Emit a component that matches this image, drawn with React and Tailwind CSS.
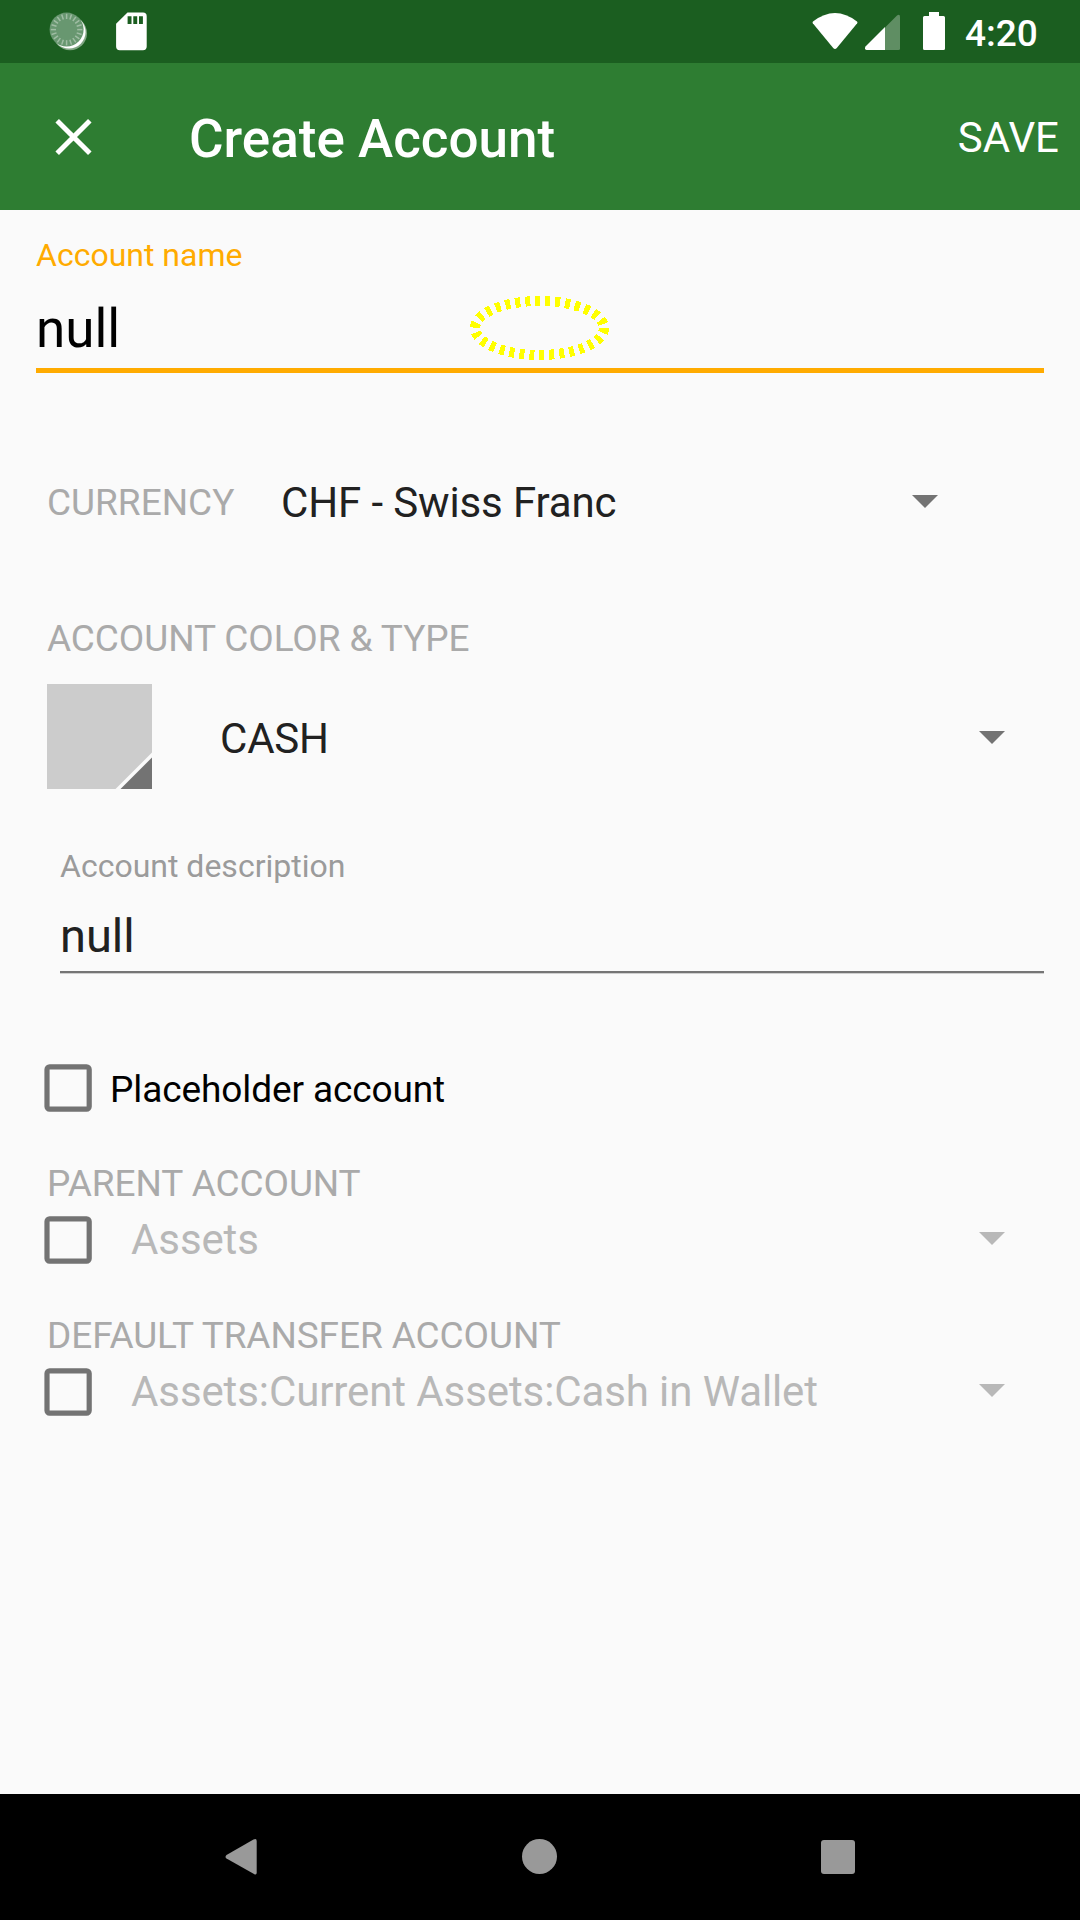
const SPINNER_TICKS = Array.from({ length: 20 }, (_, i) => i * 18);

function Caret({ className = "" }) {
  return (
    <svg width="26" height="13" viewBox="0 0 26 13" className={`block shrink-0 ${className}`}>
      <path d="M0 0H26L13 13Z" fill="currentColor" />
    </svg>
  );
}

function Checkbox() {
  return (
    <span className="block size-12 shrink-0">
      <svg width="48" height="48" viewBox="0 0 48 48" className="block">
        <rect x="3" y="2.9" width="42.2" height="42.2" rx="2.6" fill="none" stroke="#737373" strokeWidth="5.2" />
      </svg>
    </span>
  );
}

function StatusBar() {
  return (
    <div className="flex h-[63px] items-start bg-[#1b5e20] text-white">
      <svg width="200" height="63" viewBox="0 0 200 63" className="block">
        <circle cx="70" cy="33.2" r="17" fill="#fff" fillOpacity="0.45" />
        <circle cx="69" cy="32" r="16.6" fill="#fff" />
        <circle cx="66.6" cy="29.6" r="17" fill="#689770" />
        {SPINNER_TICKS.map((a) => (
          <path key={a} d="M66.6 13.8V19" stroke="#a0bda4" strokeWidth="1.5" transform={`rotate(${a} 66.6 29.6)`} />
        ))}
        <path d="M127.5 12.5H143a3.7 3.7 0 0 1 3.7 3.7V46.5a3.7 3.7 0 0 1-3.7 3.7H119.8a3.7 3.7 0 0 1-3.7-3.7V23.8Z" fill="#fff" />
        <path d="M127.6 16.3h3.9v7.7h-3.9zM133.3 16.3h3.9v7.7h-3.9zM139 16.3h3.9v7.7h-3.9z" fill="#1b5e20" />
      </svg>
      <svg width="160" height="63" viewBox="800 0 160 63" className="ml-auto block">
        <path d="M813 21.5Q835 4.5 857 21.5Q857.9 22.3 857.2 23.2L836.800 48Q835 50 833.200 48L812.8 23.2Q812.1 22.3 813 21.5Z" fill="#fff" />
        <path d="M897 15.600Q900 13.500 900 17V48.500Q900 50 898.500 50H885V27.500Z" fill="#fff" fillOpacity="0.3" />
        <path d="M885 27V50H866.500Q864 49.500 865.500 46.500Z" fill="#fff" />
        <path d="M929 12h10v4h4.500q1.500 0 1.500 1.500v31q0 1.500-1.500 1.500h-19q-1.500 0-1.500-1.500v-31q0-1.500 1.500-1.500h4.500z" fill="#fff" />
      </svg>
      <span className="mr-[41px] ml-[5px] w-[74px] text-[37px] leading-[67px] font-medium whitespace-nowrap">4:20</span>
    </div>
  );
}

function AppBar() {
  return (
    <header className="flex h-[147px] items-center bg-[#2e7d32] text-white">
      <svg width="38" height="38" viewBox="0 0 38 38" className="ml-[54px] block">
        <path d="M3.2 2.700L35.800 35.300M35.800 2.700L3.2 35.300" stroke="#fff" strokeWidth="5" />
      </svg>
      <h1 className="mt-[5px] ml-[97px] text-[53px] leading-[60px] font-medium">Create Account</h1>
      <button className="mt-[3px] mr-[21px] ml-auto text-[42px] leading-[50px]">SAVE</button>
    </header>
  );
}

function AccountField({ label, value }) {
  return (
    <section className="h-[152px]">
      <h2 className="ml-[47px] h-[49px] text-[37px] leading-[33px] tracking-[-0.08px] text-[#aaaaaa]">{label}</h2>
      <div className="flex h-12 items-center">
        <div className="ml-[44px]">
          <Checkbox />
        </div>
        <span className="-mt-px ml-[39px] text-[42px] leading-[48px] tracking-[-0.1px] whitespace-nowrap text-[#b8b8b8]">
          {value}
        </span>
        <Caret className="mr-[75.5px] mb-[3px] ml-auto text-[#b8b8b8]" />
      </div>
    </section>
  );
}

function NavigationBar() {
  return (
    <nav className="flex h-[126px] items-center bg-black text-[#999999]">
      <svg width="32" height="38" viewBox="0 0 32 38" className="ml-[225px] block">
        <path d="M28.500 1.500Q31.7 0 31.7 3V34.500Q31.7 37.500 29 36L1.500 20.500Q-.5 19 1.500 17Z" fill="currentColor" />
      </svg>
      <div className="mb-px ml-[265px] size-[35px] rounded-full bg-[#999999]" />
      <div className="ml-[264px] size-[34px] rounded-[3px] bg-[#999999]" />
    </nav>
  );
}

export default function App() {
  return (
    <div className="flex h-[1920px] w-[1080px] flex-col overflow-hidden bg-[#fafafa] font-['Roboto',sans-serif]">
      <StatusBar />
      <AppBar />
      <main className="flex-1">
        <div className="relative mx-[36px] h-[163px] border-b-[5px] border-[#ffab00]">
          <label className="block pt-[25px] text-[32px] leading-[40px] text-[#ffab00]">Account name</label>
          <div className="mt-[24px] text-[53px] leading-[60px] text-black">null</div>
          <svg width="144" height="70" viewBox="-72 -35 144 70" className="absolute top-[83px] left-[432px]" shapeRendering="crispEdges">
            <ellipse cx="-0.5" rx="64.5" ry="27" fill="none" stroke="#ffff00" strokeWidth="10" strokeDasharray="5 5" />
          </svg>
        </div>

        <div className="mt-[98px] flex h-[62px] items-center">
          <span className="mt-px ml-[47px] w-[234px] text-[37px] leading-[45px] text-[#aaaaaa]">CURRENCY</span>
          <span className="mt-px text-[42px] leading-[50px] tracking-[-0.13px] text-[#212121]">CHF - Swiss Franc</span>
          <Caret className="mr-[142.5px] mb-px ml-auto text-[#737373]" />
        </div>

        <h2 className="mt-[83px] ml-[47px] text-[37px] leading-[45px] tracking-[-0.08px] text-[#aaaaaa]">
          ACCOUNT COLOR &amp; TYPE
        </h2>
        <div className="mt-[23px] flex h-[105px] items-center">
          <div className="ml-[47px] size-[105px] bg-[#cccccc]">
            <svg width="105" height="105" viewBox="0 0 105 105" className="block">
              <path d="M68.500 105L105 68.500V105Z" fill="#fafafa" />
              <path d="M73.500 105L105 73.500V105Z" fill="#737373" />
            </svg>
          </div>
          <span className="mt-[4px] ml-[68px] text-[42px] leading-[50px] tracking-[-0.2px] text-[#212121]">CASH</span>
          <Caret className="mt-[2px] mr-[75.5px] ml-auto text-[#737373]" />
        </div>

        <div className="mt-[57px] mr-[36px] ml-[60px] h-[127px] border-b-[2px] border-[#757575] shadow-[0_1px_0_#cfcfcf]">
          <label className="block text-[32px] leading-[40px] text-[#9b9b9b]">Account description</label>
          <div className="mt-[24px] text-[47px] leading-[52px] text-[#212121]">null</div>
        </div>

        <div className="mt-[91px] flex h-12 items-center">
          <div className="ml-[44px]">
            <Checkbox />
          </div>
          <span className="mt-[3px] ml-[18px] text-[37px] leading-[45px] tracking-[-0.1px] text-black">
            Placeholder account
          </span>
        </div>

        <div className="mt-[55px]">
          <AccountField label="PARENT ACCOUNT" value="Assets" />
          <AccountField label="DEFAULT TRANSFER ACCOUNT" value="Assets:Current Assets:Cash in Wallet" />
        </div>
      </main>
      <NavigationBar />
    </div>
  );
}
